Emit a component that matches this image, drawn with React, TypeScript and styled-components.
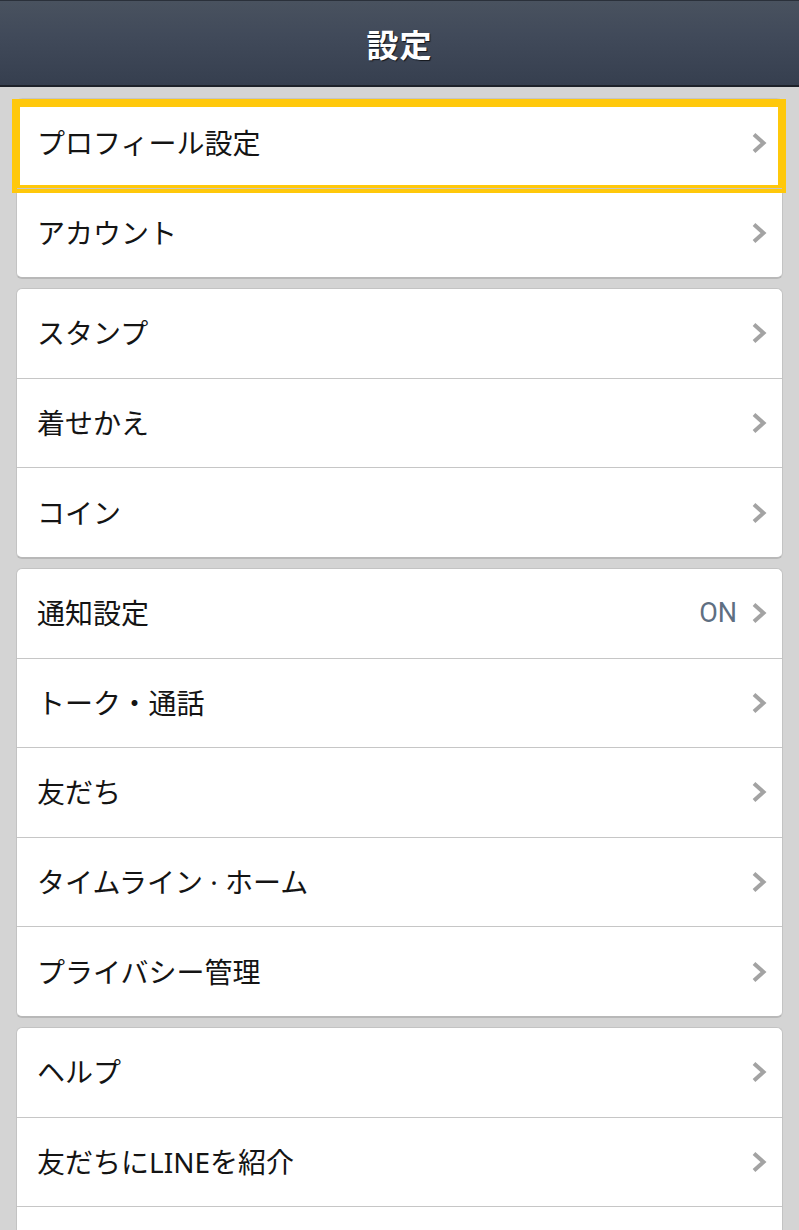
import React from "react";
import styled, { createGlobalStyle } from "styled-components";

const GlobalStyle = createGlobalStyle`
  html, body {
    margin: 0;
    padding: 0;
    background: #d4d4d4;
  }
  body {
    font-family: "Noto Sans", "Noto Sans CJK JP", sans-serif;
    -webkit-font-smoothing: antialiased;
  }
`;

const Page = styled.div`
  width: 799px;
  height: 1230px;
  background: #d4d4d4;
  overflow: hidden;
`;

const Header = styled.header`
  height: 84px;
  display: flex;
  align-items: center;
  justify-content: center;
  background: linear-gradient(#49525f 0%, #414a5a 40%, #363f4f 100%);
  border-top: 1px solid #2a303a;
  border-bottom: 2px solid #1d2129;
`;

const Title = styled.h1`
  margin: 0;
  color: #ffffff;
  font-family: "Noto Sans CJK JP", sans-serif;
  font-size: 32px;
  font-weight: 700;
  letter-spacing: 1px;
  text-shadow: 1px 1px 1px rgba(0, 0, 0, 0.7);
`;

const List = styled.div`
  display: flex;
  flex-direction: column;
  gap: 9px;
  padding: 11px 16px 0 16px;
`;

const Card = styled.section`
  background: #ffffff;
  border: 1px solid #c3c3c3;
  border-bottom: 2px solid #b8b8b8;
  border-radius: 6px;
  display: flex;
  flex-direction: column;
`;

const Row = styled.div<{ $focused?: boolean }>`
  position: relative;
  height: 88.6px;
  display: flex;
  align-items: center;
  padding: 0 15px 0 20px;
  & + & {
    border-top: 1px solid #c6c6c6;
  }
  ${(p) =>
    p.$focused &&
    `
    &::after {
      content: "";
      position: absolute;
      top: 0;
      bottom: -5px;
      left: -5px;
      right: -4px;
      border: 8px solid #ffc80b;
      pointer-events: none;
    }
  `}
`;

const Label = styled.span`
  flex: 1;
  font-family: "Noto Sans", "Noto Sans CJK JP", sans-serif;
  font-size: 28px;
  color: #141414;
  line-height: 1;
  white-space: nowrap;
`;

const Value = styled.span`
  font-family: Roboto, "Noto Sans", sans-serif;
  font-size: 27px;
  color: #5f6f82;
  margin-right: 14px;
  line-height: 1;
`;

const Chevron = () => (
  <svg width="16" height="22" viewBox="0 0 16 22" aria-hidden="true">
    <path
      d="M3 2.5 L12.5 11 L3 19.5"
      fill="none"
      stroke="#a3a3a3"
      strokeWidth="4"
      strokeLinecap="butt"
      strokeLinejoin="miter"
    />
  </svg>
);

type Item = { label: string; value?: string; focused?: boolean };

const groups: Item[][] = [
  [{ label: "プロフィール設定", focused: true }, { label: "アカウント" }],
  [{ label: "スタンプ" }, { label: "着せかえ" }, { label: "コイン" }],
  [
    { label: "通知設定", value: "ON" },
    { label: "トーク・通話" },
    { label: "友だち" },
    { label: "タイムライン · ホーム" },
    { label: "プライバシー管理" },
  ],
  [{ label: "ヘルプ" }, { label: "友だちにLINEを紹介" }, { label: "LINEについて" }],
];

export default function App() {
  return (
    <Page>
      <GlobalStyle />
      <Header>
        <Title>設定</Title>
      </Header>
      <List>
        {groups.map((g, gi) => (
          <Card key={gi}>
            {g.map((it) => (
              <Row key={it.label} $focused={it.focused}>
                <Label>{it.label}</Label>
                {it.value && <Value>{it.value}</Value>}
                <Chevron />
              </Row>
            ))}
          </Card>
        ))}
      </List>
    </Page>
  );
}
